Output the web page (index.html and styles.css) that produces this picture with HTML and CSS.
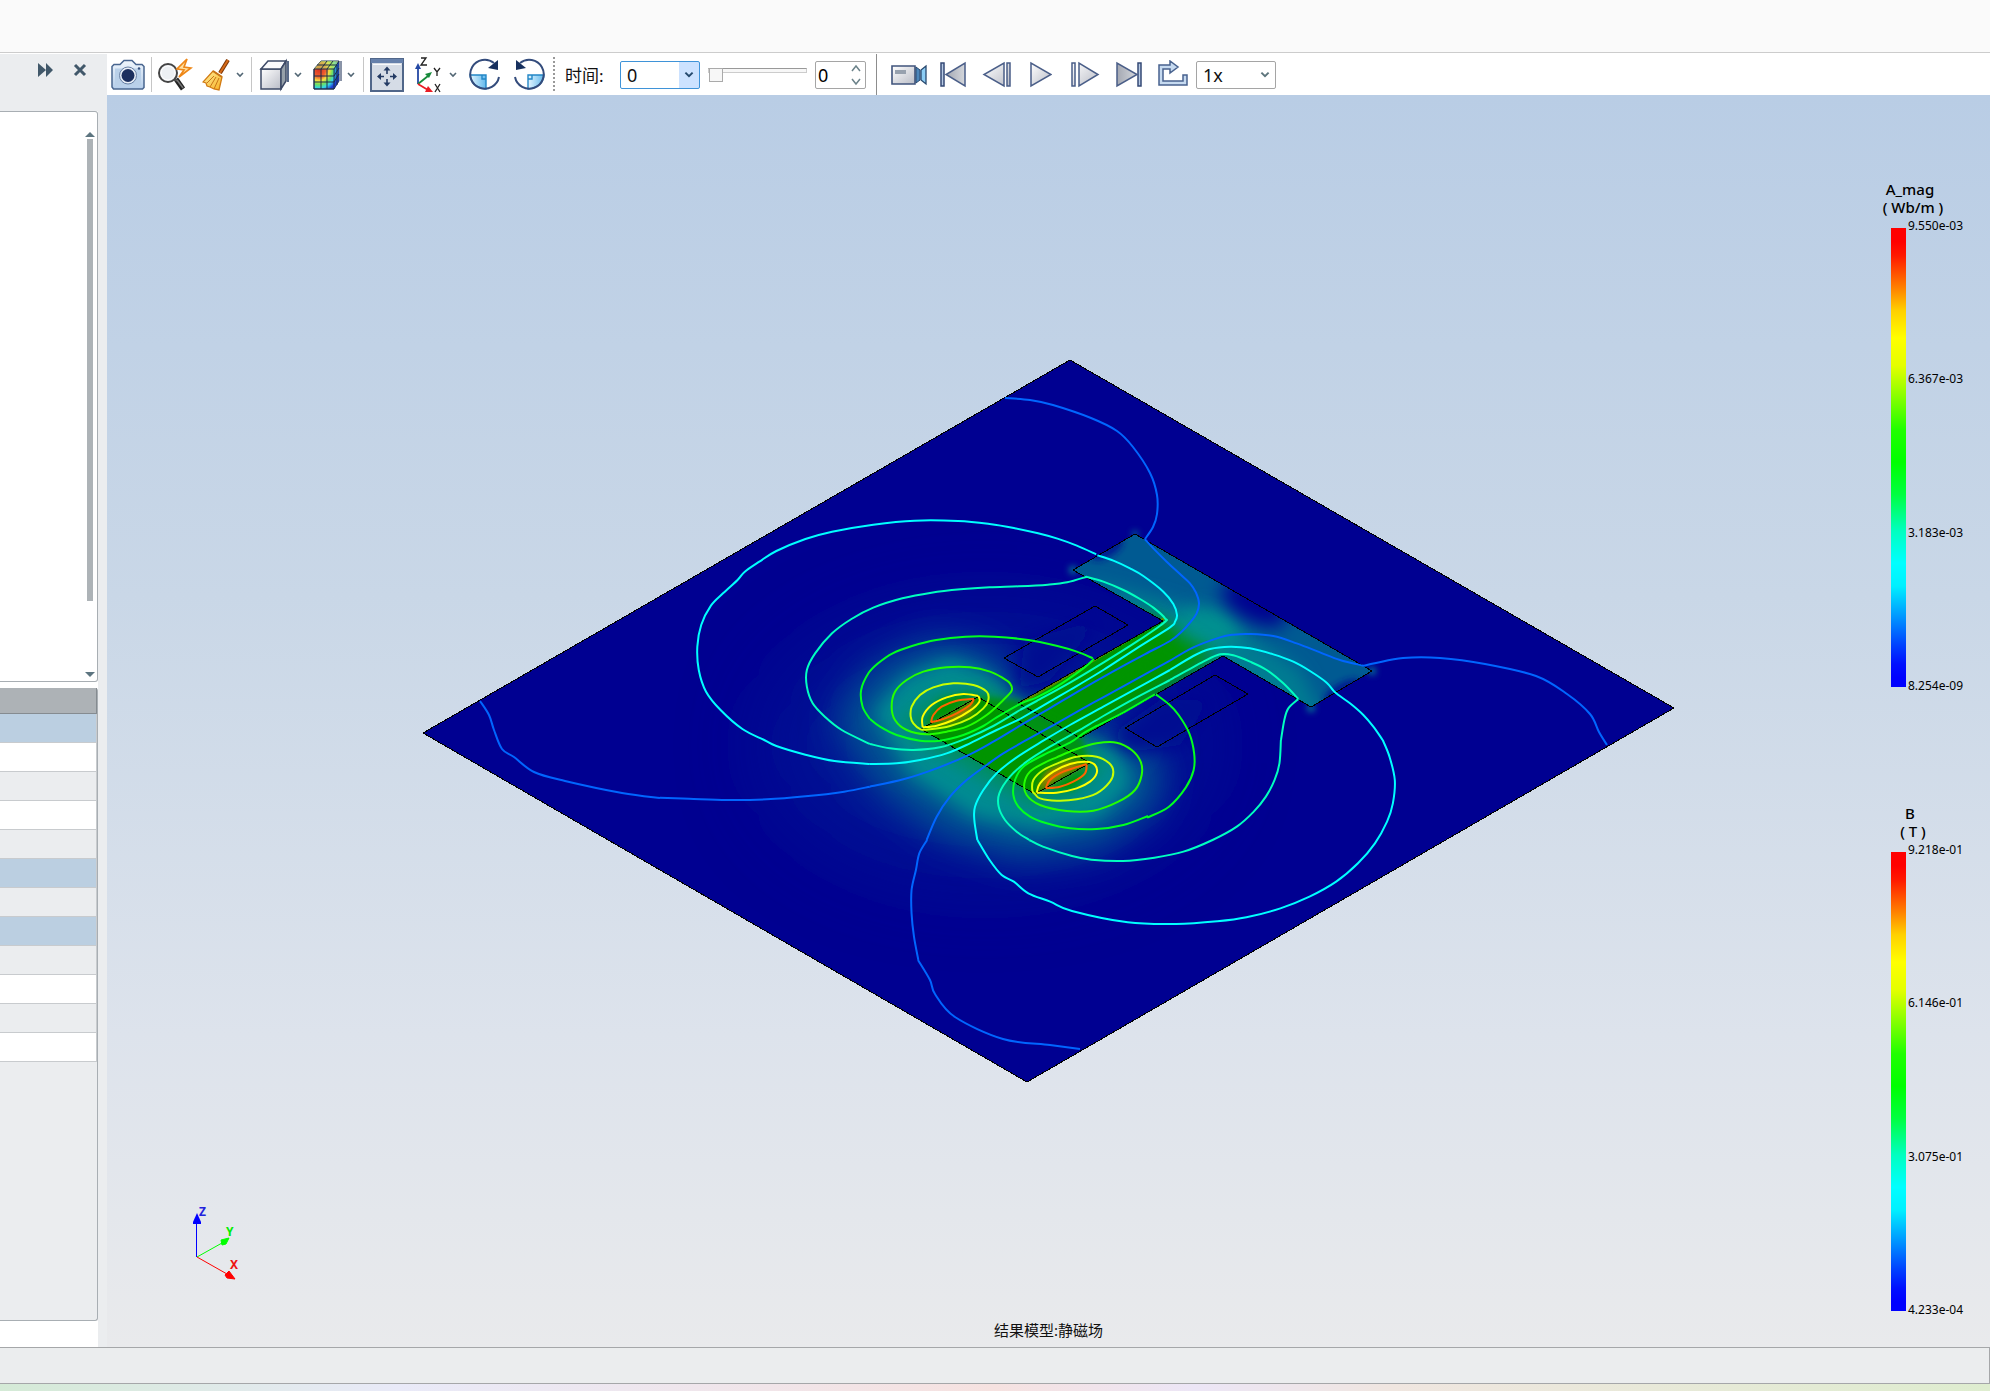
FILE: index.html
```html
<!DOCTYPE html>
<html lang="zh-CN">
<head>
<meta charset="utf-8">
<title>静磁场</title>
<link rel="stylesheet" href="styles.css">
</head>
<body>
<svg class="defs" width="0" height="0" aria-hidden="true">
  <defs>
    <linearGradient id="steel" x1="0" y1="0" x2="1" y2="1"><stop offset="0" stop-color="#fff"/><stop offset="1" stop-color="#b9bcc6"/></linearGradient>
    <linearGradient id="iron" x1="0" y1="0" x2="1" y2="0"><stop offset="0" stop-color="#a4a8b2"/><stop offset="1" stop-color="#d4d7dc"/></linearGradient>
    <linearGradient id="sky" x1="0" y1="0" x2="0" y2="1"><stop offset="0" stop-color="#f0f6fc"/><stop offset="1" stop-color="#b4cdea"/></linearGradient>
    <linearGradient id="gold" x1="0" y1="0" x2="1" y2="1"><stop offset="0" stop-color="#fff0a0"/><stop offset="1" stop-color="#f8b020"/></linearGradient>
    <linearGradient id="water" x1="0" y1="0" x2="1" y2="0"><stop offset="0" stop-color="#e4f6ff"/><stop offset="1" stop-color="#62b8ec"/></linearGradient>
    <radialGradient id="heat" cx=".2" cy=".3" r=".9"><stop offset="0" stop-color="#d83020"/><stop offset=".3" stop-color="#f06030"/><stop offset=".45" stop-color="#f8e040"/><stop offset=".6" stop-color="#70e060"/><stop offset=".74" stop-color="#30d8e8"/><stop offset=".9" stop-color="#2040d8"/></radialGradient>
    <symbol id="chev" viewBox="0 0 10 10"><path d="M2 3l3 3 3-3" fill="none" stroke="currentColor" stroke-width="1.6"/></symbol>
  </defs>
</svg>
<div class="app">
  <header class="ribbon"></header>
  <div class="work">
    <aside class="side">
      <div class="side-head">
        <button class="icon" aria-label="展开"><svg width="16" height="14"><path d="M1 0l8 7-8 7zM9 0l7 7-7 7z" fill="#41586a"/></svg></button>
        <button class="icon" aria-label="关闭"><svg width="14" height="14"><path d="M2 2l10 10M12 2L2 12" stroke="#41586a" stroke-width="3"/></svg></button>
      </div>
      <div class="side-body">
        <div class="tree">
          <svg width="10" height="5"><path d="M0 5l5-5 5 5z" fill="#5d7580"/></svg>
          <div class="track"><div class="thumb"></div></div>
          <svg width="10" height="5"><path d="M0 0l5 5 5-5z" fill="#5d7580"/></svg>
        </div>
        <div class="props">
          <table>
            <tr class="th"><td></td></tr>
            <tr class="grp"><td></td></tr><tr><td></td></tr><tr class="alt"><td></td></tr><tr><td></td></tr><tr class="alt"><td></td></tr>
            <tr class="grp"><td></td></tr><tr class="alt"><td></td></tr><tr class="grp"><td></td></tr>
            <tr class="alt"><td></td></tr><tr><td></td></tr><tr class="alt"><td></td></tr><tr><td></td></tr>
          </table>
        </div>
      </div>
    </aside>
    <main class="main">
      <div class="toolbar">
        <button class="tool" aria-label="截图"><svg width="34" height="32"><path d="M1 7.500l2-2h6l4-4h8l4 4h6l2 2v21l-1.500 1.500h-29L1 28z" fill="url(#sky)" stroke="#48658f" stroke-width="1.500"/><path d="M4 9.500h26v17H4z" fill="#b9d0e9"/><circle cx="17" cy="16.500" r="8.500" fill="#e8eef6" stroke="#6880a4"/><circle cx="17" cy="16.500" r="6.500" fill="#1c2f5e"/><circle cx="28" cy="9.500" r="1.200" fill="#34507e"/></svg></button>
        <span class="sep"></span>
        <button class="tool" aria-label="快速查看"><svg width="36" height="34"><path d="M19 21l7 10" stroke="#222" stroke-width="5"/><path d="M16 19l4 4" stroke="#555" stroke-width="2"/><path d="M20 22l6 8" stroke="#777" stroke-width="1.500"/><circle cx="11" cy="15" r="9" fill="#edf0f3" stroke="#444" stroke-width="2"/><circle cx="11" cy="15" r="7" fill="none" stroke="#fff"/><path d="M30 1L20 11l7 1-5 7 12-9-7-1z" fill="#ffe0a0" stroke="#ee8718" stroke-width="1.700"/></svg></button>
        <span class="pair"><button class="tool" aria-label="清除"><svg width="28" height="34"><path d="M26 2L18 15" stroke="#7a3506" stroke-width="4"/><path d="M26 2L18 15" stroke="#d66b18" stroke-width="2"/><path d="M11 13l9 6-3 13-5-1-2-1-2-1-3-1-1-3-3-1z" fill="url(#gold)" stroke="#d27a12" stroke-width="1.300"/><path d="M12 18l-7 7M14 19l-6 10M17 20l-5 11" stroke="#c87518"/><path d="M11 13l9 6" stroke="#c87518" stroke-width="2"/></svg></button><svg class="drop" width="10" height="10"><use href="#chev"/></svg></span>
        <span class="sep"></span>
        <span class="pair wide"><button class="tool" aria-label="显示"><svg width="30" height="34"><path d="M2 11h20v20H2z" fill="url(#steel)" stroke="#3c4966" stroke-width="1.500"/><path d="M2 11l7-8h18l-5 8z" fill="#fafafc" stroke="#3c4966" stroke-width="1.500"/><path d="M22 11l5-8v20l-5 8z" fill="#96a0a9" stroke="#3c4966" stroke-width="1.500"/><path d="M29 3v21" stroke="#223860" stroke-width="1.500"/></svg></button><svg class="drop" width="10" height="10"><use href="#chev"/></svg></span>
        <span class="pair wide"><button class="tool" aria-label="云图"><svg width="30" height="34"><path d="M2 11l7-8h18v20l-5 8H2z" fill="url(#heat)" stroke="#243a5c"/><path d="M2 11l7-8h18l-5 8z" fill="#c8e866" opacity=".6"/><path d="M22 11l5-8v20l-5 8z" fill="#1738bd" opacity=".4"/><path d="M2 11h20v20M9 11v20M15 11v20M2 18h20l5-8M2 24h20l5-8M9 11l6-8M15 11l6-8M5 7h20v20M22 11l5-8M2 11v20h20" fill="none" stroke="#1c2d49"/><path d="M29 3v20" stroke="#142850"/></svg></button><svg class="drop" width="10" height="10"><use href="#chev"/></svg></span>
        <span class="sep"></span>
        <button class="tool" aria-label="适应窗口"><svg width="34" height="34"><path d="M1 1h32v32H1z" fill="#d5dce6" stroke="#51678a" stroke-width="2"/><path d="M1 1h32v4H1z" fill="#6681ac"/><path d="M3 6.500h28" stroke="#f8fafc"/><path d="M17 11v5M17 21v5M9 18.500h5M20 18.500h5" stroke="#243b64" stroke-width="1.600"/><path d="M13.500 12.500l3.500-4 3.500 4zM13.500 24.500l3.500 4 3.500-4zM11 15l-4 3.500 4 3.500zM23 15l4 3.500-4 3.500z" fill="#243b64"/></svg></button>
        <span class="pair wide"><button class="tool axes" aria-label="视图方向"><svg width="28" height="36"><path d="M4 27V10" stroke="#2448a4" stroke-width="1.800"/><path d="M1 12l3-6 3 6z" fill="#2448a4"/><path d="M4 27l10-8" stroke="#168a3a" stroke-width="1.800"/><path d="M11 17l7-2-3 6z" fill="#168a3a"/><path d="M4 27l10 6" stroke="#ea1c24" stroke-width="1.800"/><path d="M14 29l5 6-8 0z" fill="#ea1c24"/><path d="M7 1h5l-5 7h6M20 11l3 4 3-4M23 15v4M21 27l5 8M26 27l-5 8" fill="none" stroke="#222" stroke-width="1.300"/></svg></button><svg class="drop" width="10" height="10"><use href="#chev"/></svg></span>
        <button class="tool turn" aria-label="顺时针旋转"><svg width="34" height="34"><path d="M2 17h16v14Q3 29 2 17z" fill="url(#water)" stroke="#2387c6" stroke-width="1.400"/><path d="M18 21h-4v-4" fill="none" stroke="#2387c6" stroke-width="1.400"/><path d="M26 5A14.500 14.500 0 1 0 31 19" fill="none" stroke="#344c7c" stroke-width="2"/><path d="M30 2v10l-10-2z" fill="#17305e"/></svg></button>
        <button class="tool turn" aria-label="逆时针旋转"><svg width="34" height="34"><path d="M32 17H16v14Q31 29 32 17z" fill="url(#water)" stroke="#2387c6" stroke-width="1.400"/><path d="M16 21h4v-4" fill="none" stroke="#2387c6" stroke-width="1.400"/><path d="M8 5A14.500 14.500 0 1 1 3 19" fill="none" stroke="#344c7c" stroke-width="2"/><path d="M4 2v10l10-2z" fill="#17305e"/></svg></button>
        <span class="dots"></span>
        <label class="time" for="time">时间:</label>
        <span class="combo active"><select id="time"><option>0</option></select><svg width="12" height="12"><use href="#chev"/></svg></span>
        <input class="slider" type="range" min="0" max="10" value="0" aria-label="时间滑块">
        <span class="spin"><input type="text" value="0" aria-label="帧"><span class="steps"><button aria-label="增加"><svg width="12" height="9"><path d="M2 7l4-5 4 5" fill="none" stroke="#6b8289" stroke-width="1.500"/></svg></button><button aria-label="减少"><svg width="12" height="9"><path d="M2 2l4 5 4-5" fill="none" stroke="#6b8289" stroke-width="1.500"/></svg></button></span></span>
        <span class="rule"></span>
        <div class="player">
          <button aria-label="录制"><svg width="36" height="30"><path d="M1 6h23v18H1z" fill="url(#steel)" stroke="#40547c" stroke-width="1.600"/><path d="M4 10h11v4H4z" fill="#97a1ae"/><path d="M25 7l4 3v10l-4 3z" fill="#4c86ba" stroke="#28486e"/><path d="M35 6l-5 4v10l5 4z" fill="#8ccdf4" stroke="#28486e" stroke-width="1.300"/></svg></button>
          <button aria-label="第一帧"><svg width="28" height="30"><path d="M2 3h3v23H2z" fill="#b8cbe4" stroke="#354a76" stroke-width="1.500"/><path d="M26 3v23L7 14.500z" fill="url(#iron)" stroke="#4a5e88" stroke-width="1.500"/></svg></button>
          <button aria-label="上一帧"><svg width="30" height="30"><path d="M22 3v23L2 14.500zM25 3h3v23h-3z" fill="url(#steel)" stroke="#4a5e88" stroke-width="1.500"/></svg></button>
          <button aria-label="播放"><svg width="22" height="30"><path d="M1 3v23l20-11.500z" fill="url(#steel)" stroke="#4a5e88" stroke-width="1.500"/></svg></button>
          <button aria-label="下一帧"><svg width="30" height="30"><path d="M9 3v23l19-11.500zM2 3h3v23H2z" fill="url(#steel)" stroke="#4a5e88" stroke-width="1.500"/></svg></button>
          <button aria-label="最后一帧"><svg width="28" height="30"><path d="M23 3h3v23h-3z" fill="#b8cbe4" stroke="#354a76" stroke-width="1.500"/><path d="M2 3v23l20-11.500z" fill="url(#iron)" stroke="#4a5e88" stroke-width="1.500"/></svg></button>
          <button aria-label="循环"><svg width="30" height="30"><path d="M1 25V5h11V1l8 6-8 6V9H5v12h20v-6h4v10z" fill="#c6daf0" stroke="#48628e" stroke-width="1.500"/></svg></button>
        </div>
        <span class="combo"><select aria-label="播放速度"><option>1x</option></select><svg width="12" height="12"><use href="#chev"/></svg></span>
      </div>
      <section class="view">
        <svg class="scene" viewBox="107 95 1883 1252" preserveAspectRatio="xMidYMid meet">
          <defs>
            <clipPath id="plate"><path d="M1070 360L1674 708 1027 1082 423 733z"/></clipPath>
            <clipPath id="core"><path d="M1135 534L1073 570 1163 621 1018 703 1080 738 1223 656 1311 707 1372 671z"/></clipPath>
            <clipPath id="magnet"><path d="M978 697L921 729 1035 794 1090 763z"/></clipPath>
            <filter id="b3" x="-1" y="-1" width="3" height="3"><feGaussianBlur stdDeviation="3"/></filter>
            <filter id="b8" x="-1" y="-1" width="3" height="3"><feGaussianBlur stdDeviation="9"/></filter>
            <filter id="b18" x="-1" y="-1" width="3" height="3"><feGaussianBlur stdDeviation="18"/></filter>
            <filter id="b50" x="-1" y="-1" width="3" height="3"><feGaussianBlur stdDeviation="50"/></filter>
          </defs>
          <path d="M1070 360L1674 708 1027 1082 423 733z" fill="#000091"/>
          <g clip-path="url(#plate)">
            <ellipse cx="985" cy="745" rx="210" ry="120" fill="#002096" filter="url(#b50)" opacity=".8"/>
            <path d="M835 720L870 670 930 640 990 650 1020 700 1080 735 1130 735 1165 765 1155 810 1100 850 1020 860 940 835 880 790z" fill="#005492" filter="url(#b18)"/>
            <path d="M874 712L905 677 950 659 992 675 1018 705 1080 738 1120 750 1132 785 1100 818 1040 830 975 818 910 775z" fill="#008c92" filter="url(#b8)"/>
            <path d="M900 722L935 695 985 688 1015 705 1085 740 1105 765 1075 795 1035 808 925 745z" fill="#009040" filter="url(#b8)" opacity=".6"/>
            <path d="M1025 640L1100 620 1050 680 1018 690zM1110 735L1160 700 1210 700 1180 745 1130 752z" fill="#000c91" filter="url(#b8)"/>
            <g fill="#007c92" filter="url(#b3)"><circle cx="1073" cy="570" r="4"/><circle cx="1135" cy="534" r="3"/><circle cx="1311" cy="708" r="4"/><circle cx="1372" cy="671" r="4"/></g>
          </g>
          <g clip-path="url(#core)">
            <path d="M1000 500h400v260h-400z" fill="#005a92"/>
            <path d="M1080 580L1165 600 1235 625 1300 670 1330 730 1230 690 1150 640z" fill="#007c92" filter="url(#b8)"/>
            <ellipse cx="1205" cy="630" rx="34" ry="22" fill="#009090" filter="url(#b8)"/>
            <ellipse cx="1254" cy="604" rx="36" ry="17" transform="rotate(28 1254 604)" fill="#000091" filter="url(#b8)"/>
            <ellipse cx="1107" cy="549" rx="18" ry="8" transform="rotate(-30 1107 549)" fill="#001c91" filter="url(#b3)"/>
            <ellipse cx="1342" cy="691" rx="20" ry="8" transform="rotate(-30 1342 691)" fill="#001c91" filter="url(#b3)"/>
            <path d="M990 700L1140 615 1178 635 1215 655 1080 750z" fill="#009400" filter="url(#b8)"/>
            <path d="M1000 710L1155 619 1175 638 1080 750z" fill="#009400" filter="url(#b8)"/>
            <path d="M1016 706L1165 618M1080 740L1223 658" stroke="#588a00" stroke-width="3" fill="none"/>
          </g>
          <path d="M978 697L921 729 1035 794 1090 763z" fill="#009400"/>
          <g fill="#009400" filter="url(#b3)"><path d="M1018 700L975 696 925 727 1035 792 1090 763 1080 735z" opacity=".8"/><path d="M925 724l15-24 34-8-22 18zM1048 790l25 0 15-20-15 5z"/></g>
          <path d="M924 728L945 720 976 699 970 714 948 724zM1037 792L1046 772 1066 762 1088 762 1062 776z" fill="#b07800" filter="url(#b3)"/>
          <g class="edges">
            <path d="M1070 360L1674 708 1027 1082 423 733z"/>
            <path d="M1135 534L1073 570 1163 621 1018 703 1080 738 1223 656 1311 707 1372 671z"/>
            <path d="M978 697L921 729 1035 794 1090 763z"/>
            <path d="M1095 606L1128 625 1038 677 1004 658zM1215 675L1248 694 1157 747 1125 728z"/>
          </g>
          <g class="iso">
            <g class="blue">
              <path d="M1005 398L1030 400 1053 405 1091 418 1117 431 1133 447 1150 473 1157 495 1157 514 1153 527 1145 539"/>
              <path d="M1363 666L1376 663 1403 658 1440 658 1485 664 1536 676 1567 694 1590 714 1599 732 1607 745"/>
              <path d="M660 798L622 793 565 781 534 772 514 757 502 749 494 730 489 715 480 701"/>
              <path d="M918 960L930 980 935 994 955 1017 1003 1039 1050 1045 1080 1049"/>
            </g>
            <g transform="translate(660 500) scale(.4847 .33333)">
              <path class="blue" d="M433 860L380 875 300 889 220 898 138 900 60 896 0 893M551 1020L535 1060 528 1110 519 1170 519 1240 524 1310 533 1380"/>
              <path class="cyan" d="M900 163L860 137 820 116 780 100 730 84 680 72 615 63 525 62 440 74 355 95 300 117 240 153 205 185 175 215 160 240 130 280 105 317 85 375 77 440 80 510 95 575 125 630 170 687 215 720 240 738 300 764 360 783 433 792M1491 720L1505 770 1516 840 1512 910 1500 965 1475 1030 1440 1090 1395 1145 1340 1190 1280 1225 1210 1252 1150 1264 1065 1272 965 1267 850 1233 805 1205 760 1180 730 1145 705 1125 680 1080 655 1020"/>
              <path class="aqua" d="M880 230L840 247 800 254 740 259 680 262 620 268 560 278 500 295 440 323 395 357 355 400 320 460 303 510 303 560 315 610 340 650 375 690 433 732M1281 720L1278 790 1268 840 1250 890 1225 935 1190 980 1140 1020 1080 1055 1020 1073 955 1083 890 1079 850 1068 790 1040 762 1020"/>
              <path class="green" d="M893 475L860 455 820 438 760 420 690 410 630 410 570 420 520 438 480 460 450 490 430 520 415 570 418 620 433 657M1023 583L1050 613 1070 645 1092 700 1102 760 1101 810 1085 862 1050 920 1005 953"/>
            </g>
            <g transform="translate(1020 500) scale(.33333)">
              <path class="blue" d="M374 117L400 145 440 185 480 222 510 250 528 278 537 310 530 340 510 368 487 393 450 423 374 463 273 518 185 568 84 628 0 677M1030 497L960 480 900 457 830 430 760 408 690 402 640 404 600 412 520 442 450 482"/>
              <path class="cyan" d="M232 166L280 182 330 205 370 228 430 275 460 312 471 345 465 365 450 382 350 445 250 510 150 570 50 628 0 657M450 510L520 468 570 447 630 440 690 445 760 463 820 485 870 513 920 548 945 577 990 610 1030 645 1060 680 1088 720"/>
              <path class="aqua" d="M197 230L250 245 310 270 360 297 400 323 435 355 432 368 350 425 250 488 150 548 50 603 0 630M450 540L550 485 600 463 640 466 690 485 740 510 790 550 835 597M835 597L805 625 793 660 783 720"/>
            </g>
            <g transform="translate(870 620) scale(.33333)">
              <path class="blue" d="M450 317L370 365 300 403 200 445 100 478 0 500M900 122L780 188 670 248 560 310 470 360 400 400 350 435 290 480 240 530 200 590 170 660"/>
              <path class="cyan" d="M450 297L380 330 300 370 230 400 150 420 80 430 0 432M900 150L800 205 700 260 600 315 520 362 440 412 380 460 340 510 315 560 313 600 322 660"/>
              <path class="aqua" d="M450 270L370 318 290 355 210 382 130 390 60 385 0 372M900 180L800 232 700 288 620 335 540 380 470 425 420 470 388 520 386 560 405 600 440 635 478 660"/>
              <path class="green" d="M672 117L640 145 560 200 500 232 450 252 380 292 340 318 280 345 210 362 150 362 80 345 30 320 0 297M855 223L760 278 680 318 640 340 600 368 520 405 460 440 435 480 430 525 445 560 480 590 530 610 600 625 680 627 760 615 834 588"/>
              <path class="lime" d="M425 212L400 240 350 285 290 320 230 335 170 343 110 330 75 300 65 260 75 215 110 180 160 155 230 142 300 142 360 155 400 175 420 190zM560 412L620 387 680 370 740 368 785 390 812 425 815 465 795 510 745 545 670 572 590 573 510 555 470 525 463 490 480 455 520 430z"/>
              <path class="olive" d="M122 290L125 260 150 225 190 202 250 190 310 195 350 215 355 240 340 265 300 295 240 318 180 328 152 328 130 310zM487 512L490 480 520 450 570 427 620 410 680 410 718 430 730 455 720 485 680 520 620 538 560 542 510 535 495 522z"/>
              <path class="yellow" d="M158 322L158 290 185 255 230 232 280 222 325 228M325 228L328 245 300 272 250 300 200 317 158 322M500 518L510 490 550 455 600 432 650 425 675 435 680 460 660 485 620 505 560 518 500 518"/>
              <path class="orange" d="M183 307L190 285 215 260 260 242 312 236M312 236L300 255 260 280 220 297 183 307M527 505L540 480 580 455 650 432M650 432L645 460 610 485 570 500 527 505"/>
            </g>
          </g>
          <g class="triad">
            <path d="M196.500 1257V1222" stroke="#00f"/><path d="M193 1222l4-9 4 9v2h-8z" fill="#00f"/>
            <path d="M197 1257l25-14" stroke="#0f0"/><path d="M221 1240l8-2-3 6-4 1z" fill="#0f0" stroke="#0f0"/>
            <path d="M197 1257l30 17" stroke="#f00"/><path d="M225 1275l4-4 6 8-8-1z" fill="#f00" stroke="#f00"/>
            <text x="199" y="1216" fill="#22d">Z</text><text x="226" y="1236" fill="#0e0">Y</text><text x="230" y="1269" fill="#e11">X</text>
          </g>
        </svg>
        <div class="legends">
          <div class="legend"><div class="name">A_mag</div><div class="unit">( Wb/m )</div><div class="scale"><div class="bar"></div><div class="ticks"><span>9.550e-03</span><span>6.367e-03</span><span>3.183e-03</span><span>8.254e-09</span></div></div></div>
          <div class="legend"><div class="name">B</div><div class="unit">( T )</div><div class="scale"><div class="bar"></div><div class="ticks"><span>9.218e-01</span><span>6.146e-01</span><span>3.075e-01</span><span>4.233e-04</span></div></div></div>
        </div>
        <div class="caption">结果模型:静磁场</div>
      </section>
    </main>
  </div>
  <footer class="status"></footer>
  <div class="desk"></div>
</div>
<script src="contours.js"></script>
</body>
</html>
```
FILE: contours.js
```js
// Turn each polyline of sampled contour points into a smooth curve through them.
function smooth(segment) {
  const closed = /z/i.test(segment);
  const n = segment.match(/-?[\d.]+/g).map(Number);
  const p = [];
  for (let i = 0; i < n.length; i += 2) p.push([n[i], n[i + 1]]);
  const at = i => closed ? p[(i + p.length) % p.length] : p[Math.max(0, Math.min(p.length - 1, i))];
  const last = closed ? p.length : p.length - 1;
  let d = `M${p[0]}`;
  for (let i = 0; i < last; i++) {
    const [a, b, c, e] = [at(i - 1), at(i), at(i + 1), at(i + 2)];
    const c1 = [b[0] + (c[0] - a[0]) / 6, b[1] + (c[1] - a[1]) / 6];
    const c2 = [c[0] - (e[0] - b[0]) / 6, c[1] - (e[1] - b[1]) / 6];
    d += `C${c1} ${c2} ${c}`;
  }
  return d + (closed ? 'Z' : '');
}

document.querySelectorAll('.iso path').forEach(path => {
  const segments = path.getAttribute('d').match(/M[^M]+/g);
  path.setAttribute('d', segments.map(smooth).join(''));
});
```
FILE: styles.css
```css
* { box-sizing: border-box; }
body { margin: 0; font-family: "Noto Sans", "Noto Sans CJK SC", sans-serif; color: #111; }
.defs { position: absolute; }
.app { display: flex; flex-direction: column; min-height: 100vh; background: #ebedef; }
.ribbon { height: 54px; background: #fafafa; border-bottom: 1px solid #fff; box-shadow: inset 0 -1px #ccc; }
.work { flex: 1; display: flex; }
button { border: 0; padding: 0; background: none; display: flex; align-items: center; justify-content: center; }

.side { width: 107px; flex: none; display: flex; flex-direction: column; }
.side-head { height: 57px; display: flex; align-items: flex-start; justify-content: flex-end; gap: 20px; padding: 9px 20px 0 0; }
.side-body { flex: 1; width: 98px; display: flex; flex-direction: column; background: #fff; }
.tree { height: 571px; border: 1px solid #a8aeb3; border-left: 0; border-radius: 0 3px 3px 0; background: #fff; display: flex; flex-direction: column; align-items: flex-end; padding: 20px 2px 4px 0; }
.track { flex: 1; width: 6px; margin: 2px; }
.thumb { height: 87%; background: #adb3b7; }
.props { flex: 1; margin: 6px 0 26px; background: #ebedef; border: 1px solid #a8aeb3; border-width: 0 1px 1px 0; border-radius: 0 3px 3px 0; }
.props table { width: 100%; border-collapse: separate; border-spacing: 0; }
.props td { height: 29px; padding: 0; background: #fff; border-bottom: 1px solid #c8cbce; border-right: 1px solid #c8cbce; }
.props .alt td { background: #ebedef; }
.props .grp td { background: #bbcfe1; }
.props .th td { height: 26px; background: #adb2b6; border-color: #858b90; }

.main { flex: 1; min-width: 0; display: flex; flex-direction: column; }
.toolbar { height: 41px; background: #fff; display: flex; align-items: center; gap: 5px; padding-left: 3px; }
.tool { width: 36px; height: 36px; }
.turn { width: 39px; }
.pair { display: flex; align-items: center; color: #526674; }
.pair .drop { margin: 0 1px; }
.wide .tool { width: 34px; }
.wide .axes { width: 36px; }
.wide .drop { margin: 0 2px; }
.sep { width: 1px; height: 35px; background: #c6c6c6; }
.dots { width: 2px; height: 35px; background: repeating-linear-gradient(#999 0 2px, transparent 2px 4px); }
.time { font-size: 17px; width: 50px; margin-left: 5px; white-space: nowrap; }
.combo { width: 80px; height: 28px; border: 1px solid #a5a5a5; border-radius: 2px; display: grid; grid-template-columns: 1fr 21px; align-items: center; color: #5d757c; background: #fff; }
.combo select { grid-area: 1 / 1 / 2 / 3; width: 100%; height: 26px; border: 0; background: none; appearance: none; font: 18px "Noto Sans", sans-serif; color: #111; padding: 0 6px; }
.combo svg { grid-area: 1 / 2; justify-self: center; pointer-events: none; }
.active { border-color: #3f93d8; color: #24496d; background: linear-gradient(#cce2ff, #cce2ff) right / 20px 100% no-repeat #fff; }
.slider { appearance: none; width: 99px; height: 28px; margin: 0 3px; padding-bottom: 8px; background: none; }
.slider::-webkit-slider-runnable-track { height: 5px; border: 1px solid #ccc; border-top: 1px solid #999; background: #f7f7f7; }
.slider::-webkit-slider-thumb { appearance: none; width: 14px; height: 14px; margin-top: -1px; background: #f7f7f7; border: 1px solid #aaa; }
.spin { width: 51px; height: 28px; border: 1px solid #a5a5a5; border-radius: 2px; display: flex; }
.spin input { flex: 1; min-width: 0; border: 0; padding: 0 2px; background: none; font: 18px "Noto Sans", sans-serif; }
.steps { display: flex; flex-direction: column; justify-content: space-around; width: 18px; }
.rule { width: 1px; height: 41px; background: #8d8d8d; margin: 0 5px; }
.player { display: flex; margin-right: -4px; }
.player button { width: 44px; height: 36px; }

.view { flex: 1; display: grid; grid-template: 1fr / 1fr; background: linear-gradient(#b9cde5, #c9d7e7 40%, #dde3ec 75%, #e9eaec); }
.scene, .legends, .caption { grid-area: 1 / 1; }
.scene { width: 100%; height: auto; display: block; }
.edges path { fill: none; stroke: #000; stroke-width: 1; shape-rendering: crispEdges; }
.iso path { fill: none; stroke-width: 2; stroke-linejoin: round; vector-effect: non-scaling-stroke; }
.iso .blue path, .iso path.blue { stroke: #06f; }
.iso .cyan { stroke: #0ff; }
.iso .aqua { stroke: #00ffc0; }
.iso .green { stroke: #00ff20; }
.iso .lime { stroke: #24ff00; }
.iso .olive { stroke: #c8ff00; }
.iso .yellow { stroke: #ff0; }
.iso .orange { stroke: #ff6400; }
.triad text { font: bold 12px "Noto Sans", sans-serif; }
.legends { justify-self: end; width: 111px; display: flex; flex-direction: column; gap: 117px; padding-top: 85px; }
.legend { display: flex; flex-direction: column; font-size: 15px; line-height: 18px; font-weight: 500; color: #000; }
.name, .unit { width: 68px; text-align: center; }
.name { width: 62px; }
.scale { display: flex; gap: 2px; height: 459px; margin: 12px 0 0 12px; }
.bar { width: 15px; background: linear-gradient(#f00 0 3%, #ff1800 6%, #ff8000 13%, #ffd000 18%, #ff0 24%, #e4ff00 30%, #a0ff00 35%, #20ff00 44%, #0f0 51%, #00ff40 58%, #00ffc0 66%, #0ff 73%, #00f0ff 78%, #00a0ff 84%, #0040ff 91%, #0010ff 95%, #00f 98%); }
.ticks { display: flex; flex-direction: column; justify-content: space-between; margin: -8px 0 -5px; font-size: 12px; line-height: 12px; font-weight: 400; }
.caption { align-self: end; justify-self: center; font-size: 15px; line-height: 20px; padding-bottom: 7px; }
.status { height: 37px; border: 1px solid #a5a7a9; border-left: 0; background: #ebedee; }
.desk { height: 7px; background: linear-gradient(90deg, #d4ead6, #e9eaf8 20%, #f6e2e0 50%, #ece6f6 60%, #f0e6e0 70%, #deedcf); }
```
